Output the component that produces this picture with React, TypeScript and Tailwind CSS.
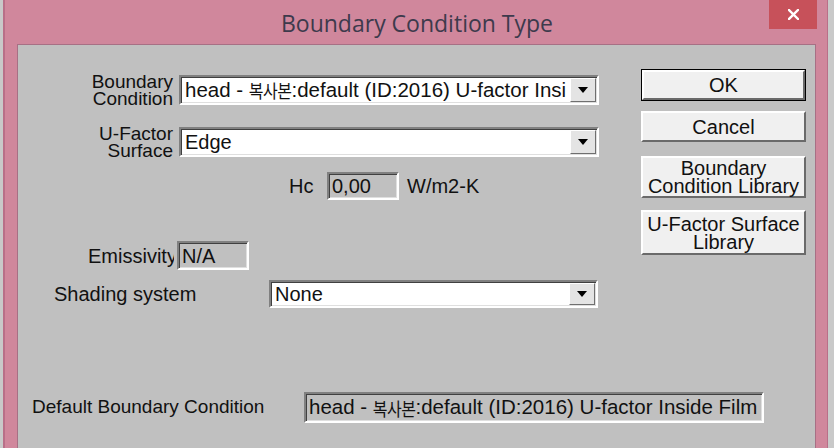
import React from 'react';

const sunken =
  'border-2 border-t-[#808080] border-l-[#808080] border-b-white border-r-white shadow-[inset_1px_1px_0_#404040,inset_-1px_-1px_0_#dfdfdf]';

const Hangul = ({ children }: { children: React.ReactNode }) => (
  <span className="font-['Noto_Sans_CJK_KR',sans-serif] text-[16px] inline-block scale-y-[1.15] tracking-[-0.5px]">{children}</span>
);

const DropButton = () => (
  <div className="w-[26px] shrink-0 bg-[#e4e4e4] border border-t-white border-l-white border-b-[#6f6f6f] border-r-[#6f6f6f] flex items-center justify-center">
    <div className="w-0 h-0 border-l-[5px] border-r-[5px] border-t-[6px] border-l-transparent border-r-transparent border-t-black" />
  </div>
);

const Combo = ({ width, height, children }: { width: string; height: string; children: React.ReactNode }) => (
  <div className={`flex bg-white p-px ${sunken} ${width} ${height}`}>
    <div className="flex-1 flex items-center pl-[3px] overflow-hidden whitespace-pre">{children}</div>
    <DropButton />
  </div>
);

const Field = ({ className, children }: { className: string; children: React.ReactNode }) => (
  <div className={`flex items-center bg-[#c0c0c0] pl-[3px] whitespace-pre overflow-hidden ${sunken} ${className}`}>
    {children}
  </div>
);

const WinButton = ({ className, children }: { className: string; children: React.ReactNode }) => (
  <div
    className={`flex flex-col items-center justify-center bg-[#f0f0f0] border-2 border-t-white border-l-white border-b-[#6a6a6a] border-r-[#6a6a6a] leading-[18px] text-center ${className}`}
  >
    {children}
  </div>
);

export default function App() {
  return (
    <div className="w-[834px] h-[448px] overflow-hidden bg-[#c9c9c9] pl-[3px] pr-[6px]">
      <div className="h-full bg-[#d0879c] border-l-2 border-r border-[#b96f88] flex flex-col">
        {/* Title bar */}
        <div className="relative h-[44px] shrink-0 flex items-center justify-center">
          <span className="font-['Open_Sans',sans-serif] text-[23px] text-[#3d3a4c] pl-[2px] mt-[2px]">Boundary Condition Type</span>
          <div className="absolute right-[10px] top-0 w-[48px] h-[29px] bg-[#c7515a] flex items-center justify-center">
            <svg width="11" height="11" viewBox="0 0 11 11">
              <path d="M1 1 L10 10 M10 1 L1 10" stroke="white" strokeWidth="2.4" strokeLinecap="square" />
            </svg>
          </div>
        </div>

        {/* Client area */}
        <div className="flex-1 ml-[12px] mr-[11px] bg-[#c0c0c0] border-t border-l border-r border-[#a77085] flex flex-col font-['Liberation_Sans','Noto_Sans_CJK_KR',sans-serif] text-[20px] text-[#111]">
          <div className="flex h-[254px] shrink-0">
            {/* Form */}
            <div className="w-[600px] flex flex-col">
              <div className="mt-[28px] flex items-center gap-[6px]">
                <div className="w-[155px] text-right text-[19px] leading-[17px]">
                  Boundary
                  <br />
                  Condition
                </div>
                <Combo width="w-[420px]" height="h-[30px]">
                  <span className="text-[20.5px]">{'head - '}</span>
                  <Hangul>복사본</Hangul>
                  <span className="text-[20.5px]">{':default (ID:2016) U-factor Insi'}</span>
                </Combo>
              </div>
              <div className="mt-[18px] flex items-center gap-[6px]">
                <div className="w-[155px] text-right text-[19px] leading-[17px]">
                  U-Factor
                  <br />
                  Surface
                </div>
                <Combo width="w-[420px]" height="h-[30px]">
                  Edge
                </Combo>
              </div>
              <div className="mt-[13px] flex items-center h-[28px]">
                <span className="ml-[271px] w-[38px]">Hc</span>
                <Field className="w-[72px] h-[28px]">0,00</Field>
                <span className="ml-[8px]">W/m2-K</span>
              </div>
              <div className="mt-[41px] flex items-center h-[29px]">
                <div className="ml-[70px] w-[86px] overflow-hidden whitespace-nowrap">Emissivity</div>
                <Field className="ml-[3px] w-[72px] h-[29px]">N/A</Field>
              </div>
              <div className="mt-[9px] flex items-center">
                <span className="ml-[36px] w-[215px] whitespace-nowrap">Shading system</span>
                <Combo width="w-[329px]" height="h-[28px]">
                  None
                </Combo>
              </div>
            </div>

            {/* Buttons */}
            <div className="ml-[23px] w-[165px] flex flex-col">
              <div className="mt-[24px] h-[32px] border border-black flex">
                <WinButton className="flex-1">OK</WinButton>
              </div>
              <WinButton className="mt-[10px] h-[31px]">Cancel</WinButton>
              <WinButton className="mt-[14px] h-[42px]">
                <span>Boundary</span>
                <span>Condition Library</span>
              </WinButton>
              <WinButton className="mt-[12px] h-[45px]">
                <span>U-Factor Surface</span>
                <span>Library</span>
              </WinButton>
            </div>
          </div>

          {/* Default boundary condition */}
          <div className="mt-[93px] flex items-center">
            <span className="ml-[14px] w-[272px] text-[19px] whitespace-nowrap">Default Boundary Condition</span>
            <Field className="w-[460px] h-[31px]">
              <span className="text-[20.5px]">{'head - '}</span>
              <Hangul>복사본</Hangul>
              <span className="text-[20.5px]">{':default (ID:2016) U-factor Inside Film'}</span>
            </Field>
          </div>
        </div>
      </div>
    </div>
  );
}
